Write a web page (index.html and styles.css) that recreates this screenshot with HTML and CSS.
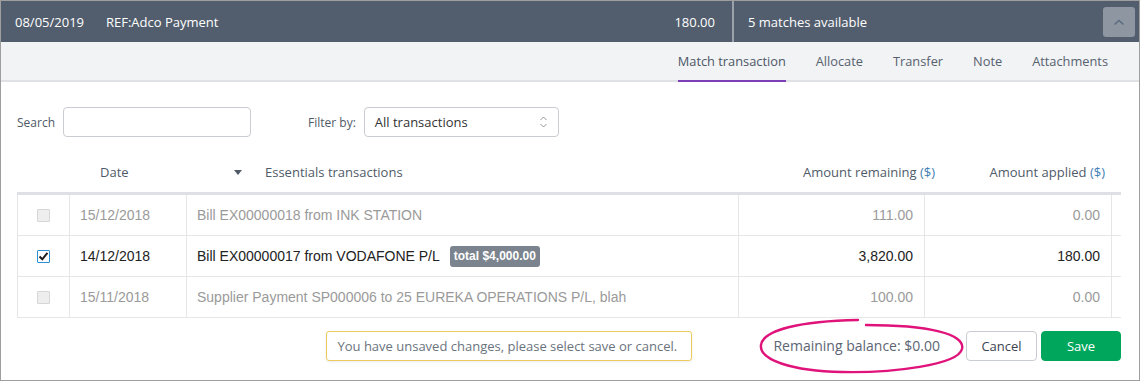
FILE: index.html
```html
<!DOCTYPE html>
<html>
<head>
<meta charset="utf-8">
<link rel="stylesheet" href="styles.css">
</head>
<body>
<div class="panel">
  <div class="topbar">
    <div class="tb-left">
      <span class="tb-date">08/05/2019</span>
      <span class="tb-ref">REF:Adco Payment</span>
      <span class="tb-amount">180.00</span>
    </div>
    <div class="tb-right">
      <span class="tb-matches">5 matches available</span>
      <button class="tb-toggle" type="button" aria-label="Collapse">
        <svg width="12" height="8" viewBox="0 0 12 8"><polyline points="1.5,6.5 6,2.5 10.5,6.5" fill="none" stroke="#5b6c80" stroke-width="1.6"/></svg>
      </button>
    </div>
  </div>
  <div class="tabs">
    <span class="tab active">Match transaction</span>
    <span class="tab">Allocate</span>
    <span class="tab">Transfer</span>
    <span class="tab">Note</span>
    <span class="tab">Attachments</span>
  </div>
  <div class="content">
    <div class="filters">
      <span class="f-label">Search</span>
      <span class="input"></span>
      <span class="f-label filter-label">Filter by:</span>
      <span class="select">
        <span>All transactions</span>
        <svg width="9" height="14" viewBox="0 0 9 14"><polyline points="1.5,5 4.5,2 7.5,5" fill="none" stroke="#9a9a9a" stroke-width="1"/><polyline points="1.5,9 4.5,12 7.5,9" fill="none" stroke="#9a9a9a" stroke-width="1"/></svg>
      </span>
    </div>
    <div class="thead">
      <span></span>
      <span class="th-date">Date</span>
      <span class="th-desc"><span class="sort"></span>Essentials transactions</span>
      <span class="th-num">Amount remaining <span class="cur">($)</span></span>
      <span class="th-num">Amount applied <span class="cur">($)</span></span>
      <span></span>
    </div>
    <div class="row muted">
      <span class="cell check"><span class="box disabled"></span></span>
      <span class="cell">15/12/2018</span>
      <span class="cell">Bill EX00000018 from INK STATION</span>
      <span class="cell num">111.00</span>
      <span class="cell num last">0.00</span>
      <span></span>
    </div>
    <div class="row">
      <span class="cell check"><span class="box checked"><svg width="11" height="11" viewBox="0 0 11 11"><path d="M1.5 5.5 L4.3 8.3 L9.5 1.8" fill="none" stroke="#1d1d1d" stroke-width="2"/></svg></span></span>
      <span class="cell">14/12/2018</span>
      <span class="cell">Bill EX00000017 from VODAFONE P/L<span class="badge">total $4,000.00</span></span>
      <span class="cell num">3,820.00</span>
      <span class="cell num last">180.00</span>
      <span></span>
    </div>
    <div class="row muted">
      <span class="cell check"><span class="box disabled"></span></span>
      <span class="cell">15/11/2018</span>
      <span class="cell">Supplier Payment SP000006 to 25 EUREKA OPERATIONS P/L, blah</span>
      <span class="cell num">100.00</span>
      <span class="cell num last">0.00</span>
      <span></span>
    </div>
    <div class="footer">
      <span class="notice">You have unsaved changes, please select save or cancel.</span>
      <span class="balance">Remaining balance: $0.00
        <svg class="ring" width="212" height="60" viewBox="756 316 212 60"><path d="M866 325 C928 325 966 334 962 349 C958 365 893 373 842 372 C792 371 759 360 761 345 C763 330 800 321 858 320" fill="none" stroke="#e0137b" stroke-width="2.4" stroke-linecap="round"/></svg>
      </span>
      <button class="btn cancel" type="button">Cancel</button>
      <button class="btn save" type="button">Save</button>
    </div>
  </div>
</div>
</body>
</html>
```

FILE: styles.css
```css
body {
  margin: 0;
  font-family: "Open Sans", sans-serif;
  background: #fff;
}

.panel {
  width: 1140px;
  height: 381px;
  box-sizing: border-box;
  border: 1px solid #9e9e9e;
  display: flex;
  flex-direction: column;
}

.topbar {
  height: 41px;
  flex: none;
  background: #525e6e;
  color: #fff;
  display: flex;
  font-size: 13px;
}

.tb-left {
  width: 733px;
  box-sizing: border-box;
  display: flex;
  align-items: center;
  padding: 0 17px 0 14px;
  border-right: 2px solid #9aa1aa;
}

.tb-date {
  margin-right: 22px;
}

.tb-amount {
  margin-left: auto;
}

.tb-right {
  flex: 1;
  display: flex;
  align-items: center;
  padding: 0 4px 0 14px;
}

.tb-toggle {
  margin-left: auto;
  width: 32px;
  height: 30px;
  border: none;
  border-radius: 3px;
  background: #8d96a1;
  padding: 0;
  display: flex;
  align-items: center;
  justify-content: center;
}

.tabs {
  height: 38px;
  flex: none;
  background: #f2f3f5;
  border-bottom: 2px solid #dfe1e5;
  display: flex;
  justify-content: flex-end;
  gap: 30px;
  padding-right: 31px;
  font-size: 12.8px;
  color: #56616e;
}

.tab {
  display: flex;
  align-items: center;
  height: 38px;
  border-bottom: 2px solid transparent;
}

.tab.active {
  border-bottom-color: #7d3fb8;
  color: #4c5766;
}

.content {
  padding: 25px 18px 0 16px;
}

.filters {
  display: flex;
  align-items: center;
  height: 30px;
  font-size: 12px;
  color: #4f5a66;
}

.f-label {
  margin-right: 8px;
}

.filter-label {
  margin-left: 57px;
}

.input {
  width: 188px;
  height: 30px;
  box-sizing: border-box;
  border: 1px solid #c9ccd0;
  border-radius: 4px;
}

.select {
  width: 195px;
  height: 30px;
  box-sizing: border-box;
  border: 1px solid #c9ccd0;
  border-radius: 4px;
  display: flex;
  align-items: center;
  justify-content: space-between;
  padding: 0 10px 0 10px;
  font-size: 13px;
  color: #333;
}

.thead {
  margin-top: 15px;
  height: 40px;
  border-bottom: 3px solid #dde0e4;
  display: grid;
  grid-template-columns: 52px 117px 1fr 200px 170px 16px;
  align-items: center;
  font-size: 13px;
  color: #4f5b69;
}

.th-date {
  padding-left: 31px;
}

.th-desc {
  display: flex;
  align-items: center;
  padding-left: 48px;
}

.sort {
  width: 0;
  height: 0;
  border-left: 4px solid transparent;
  border-right: 4px solid transparent;
  border-top: 5px solid #4f5b69;
  margin-right: 23px;
}

.th-num {
  text-align: right;
}

.cur {
  color: #3f7fb3;
}

.row {
  display: grid;
  grid-template-columns: 52px 117px 552px 186px 188px 9px;
  height: 41px;
  box-sizing: border-box;
  border-bottom: 1px solid #e6e6e6;
  font-family: "Liberation Sans", Arial, sans-serif;
  font-size: 14px;
  color: #222;
}

.row.muted {
  color: #9a9a9a;
}

.cell {
  display: flex;
  align-items: center;
  border-left: 1px solid #e6e6e6;
  padding: 0 11px 0 10px;
  white-space: nowrap;
}

.cell.num {
  justify-content: flex-end;
}

.cell.last {
  border-right: 1px solid #e6e6e6;
}

.cell.check {
  justify-content: center;
  padding: 0;
}

.box {
  width: 13px;
  height: 13px;
  box-sizing: border-box;
  border-radius: 1px;
  display: flex;
  align-items: center;
  justify-content: center;
}

.box.disabled {
  background: #eeeeee;
  border: 1px solid #d6d6d6;
}

.box.checked {
  background: #fff;
  border: 1px solid #2a8fd6;
}

.badge {
  margin-left: 10px;
  height: 21px;
  display: flex;
  align-items: center;
  padding: 0 4px;
  border-radius: 3px;
  background: #7b848e;
  color: #fff;
  font-size: 12px;
  font-weight: bold;
}

.footer {
  margin-top: 13px;
  height: 30px;
  display: flex;
  justify-content: flex-end;
  align-items: center;
}

.notice {
  width: 366px;
  height: 30px;
  box-sizing: border-box;
  display: flex;
  align-items: center;
  padding: 0 0 0 10px;
  border: 1px solid #ebcb5f;
  border-radius: 3px;
  box-shadow: 0 1px 3px rgba(0, 0, 0, 0.08);
  font-size: 13px;
  color: #6a737d;
  margin-right: 81px;
}

.balance {
  position: relative;
  font-size: 14px;
  line-height: 20px;
  color: #5b6573;
  margin-right: 26px;
}

.ring {
  position: absolute;
  left: -17px;
  top: -20px;
}

.btn {
  height: 30px;
  border-radius: 4px;
  font-family: "Open Sans", sans-serif;
  font-size: 13px;
  padding: 0;
}

.cancel {
  width: 71px;
  background: #fff;
  border: 1px solid #c9ccd0;
  color: #3b4450;
  margin-right: 4px;
}

.save {
  width: 80px;
  background: #00a65b;
  border: 1px solid #00a65b;
  color: #fff;
}
```
